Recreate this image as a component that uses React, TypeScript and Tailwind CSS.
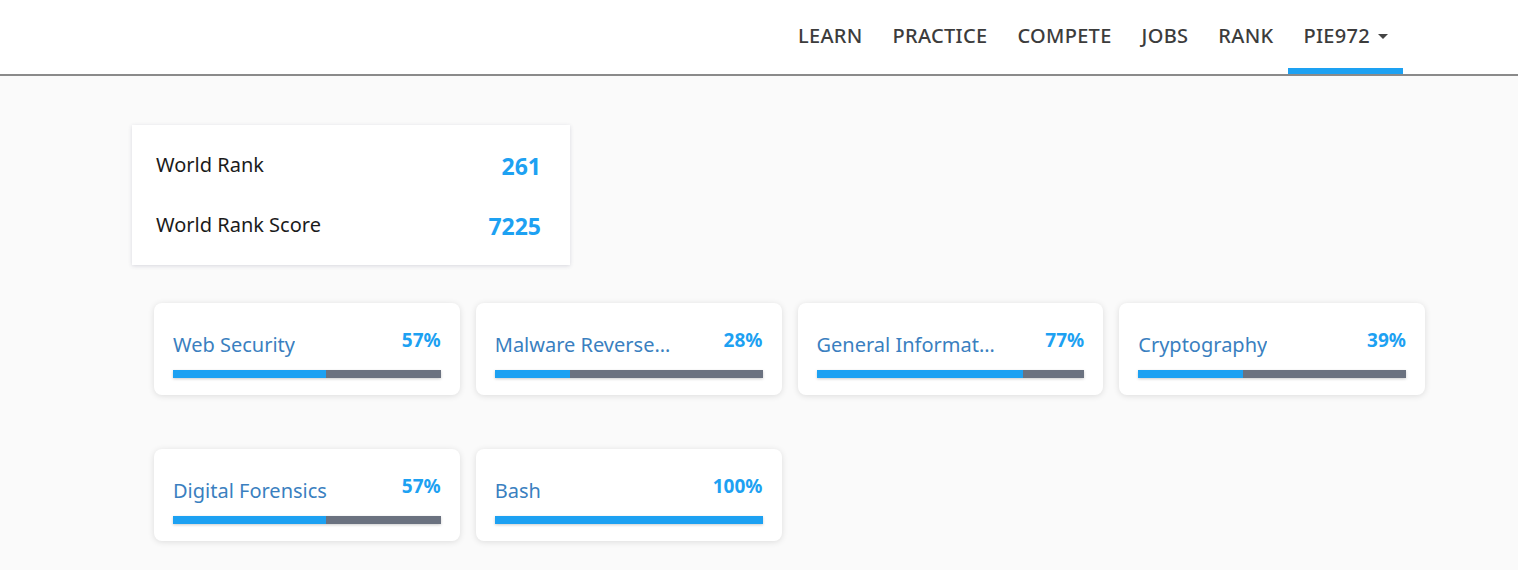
const skills = [
  { name: 'Web Security', pct: 57 },
  { name: 'Malware Reverse Engineering', pct: 28 },
  { name: 'General Information Security', pct: 77 },
  { name: 'Cryptography', pct: 39 },
  { name: 'Digital Forensics', pct: 57 },
  { name: 'Bash', pct: 100 },
]

const nav = ['LEARN', 'PRACTICE', 'COMPETE', 'JOBS', 'RANK']

function SkillCard({ name, pct }: { name: string; pct: number }) {
  return (
    <div className="rounded-lg bg-white px-[19px] pt-[26px] pb-[17px] shadow-[0_1px_6px_rgba(0,0,0,0.12)]">
      <div className="flex items-start justify-between gap-2">
        <span className="mt-[1px] min-w-0 max-w-[180px] truncate text-[20px] leading-[30px] text-[#3a7fc0]">{name}</span>
        <span className="shrink-0 text-[19px] leading-[22px] font-bold text-[#1da1f2]">{pct}%</span>
      </div>
      <div className="mt-[10px] flex h-[8px] w-full bg-[#6b7280] shadow-[0_1px_3px_rgba(0,0,0,0.2)]">
        <div className="h-full bg-[#1da1f2]" style={{ width: `${pct}%` }} />
      </div>
    </div>
  )
}

export default function App() {
  return (
    <div className="min-h-[570px] bg-[#fafafa] font-['Noto_Sans',sans-serif]">
      <header className="flex h-[76px] justify-end border-b-2 border-[#8a8a8a] bg-white pr-[115px]">
        <nav className="flex">
          {nav.map((item) => (
            <a key={item} className="flex items-center px-[15px] pb-[2px] text-[20px] font-medium tracking-[0.3px] text-[#3c3c3c]">
              {item}
            </a>
          ))}
          <a className="flex items-center border-b-[6px] border-[#1da1f2] px-[15px] pt-[4px] text-[20px] font-medium tracking-[0.3px] text-[#3c3c3c]">
            PIE972
            <span className="ml-[8px] inline-block h-0 w-0 border-x-[5px] border-t-[5px] border-x-transparent border-t-[#444]" />
          </a>
        </nav>
      </header>

      <main className="px-[132px] pt-[49px]">
        <div className="w-[438px] bg-white pt-[16px] pr-[29px] pb-[16px] pl-[24px] shadow-[0_1px_4px_rgba(60,60,100,0.18)]">
          <div className="flex h-[48px] items-center justify-between">
            <span className="text-[20px] text-[#1b1b1b]">World Rank</span>
            <span className="mt-[3px] text-[23px] font-bold text-[#1da1f2]">261</span>
          </div>
          <div className="mt-[12px] flex h-[48px] items-center justify-between">
            <span className="text-[20px] text-[#1b1b1b]">World Rank Score</span>
            <span className="mt-[3px] text-[23px] font-bold text-[#1da1f2]">7225</span>
          </div>
        </div>

        <div className="mt-[38px] ml-[22px] grid w-[1271px] grid-cols-4 gap-x-[16px] gap-y-[54px]">
          {skills.map((s) => (
            <SkillCard key={s.name} name={s.name} pct={s.pct} />
          ))}
        </div>
      </main>
    </div>
  )
}
